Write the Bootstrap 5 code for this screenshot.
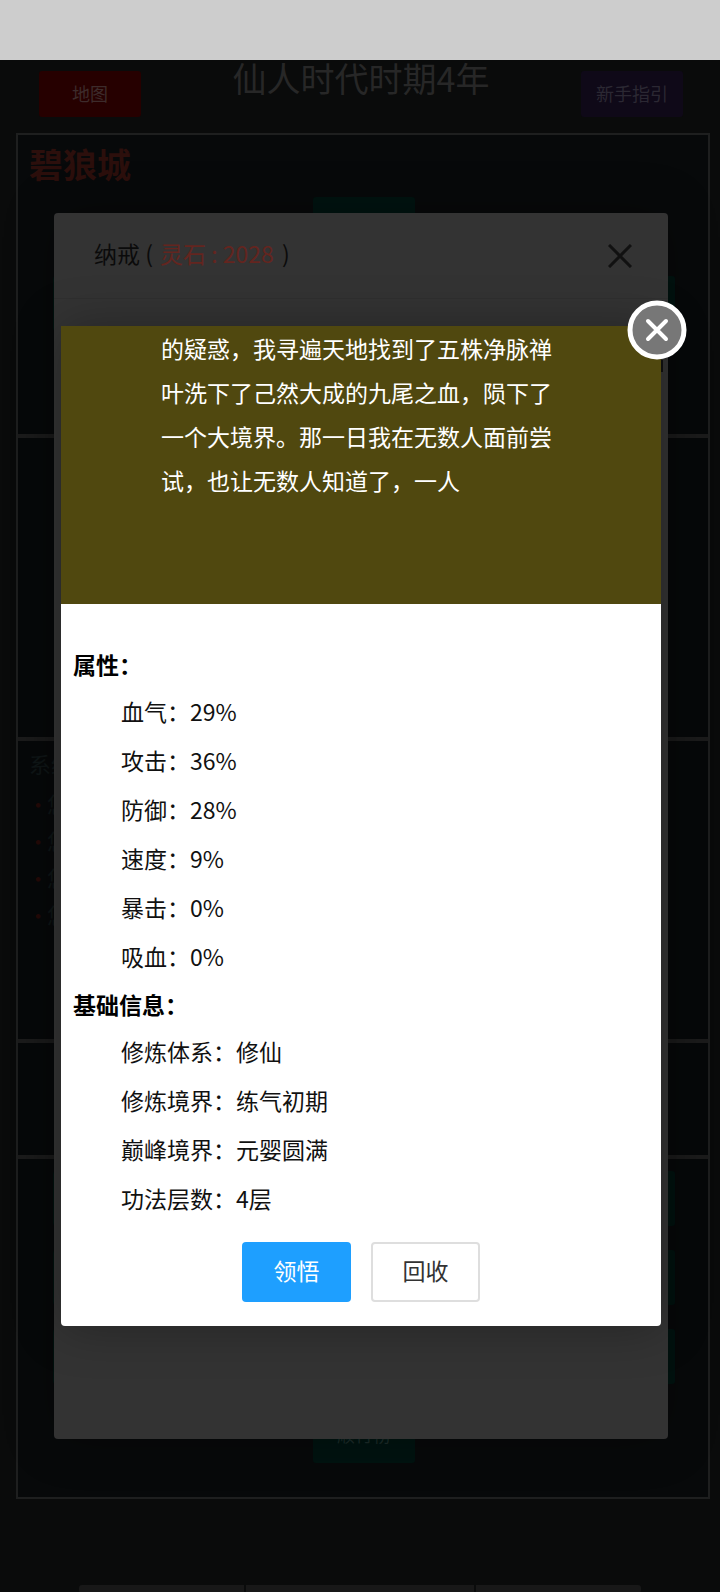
<!DOCTYPE html>
<html lang="zh-CN">
<head>
<meta charset="utf-8">
<meta name="viewport" content="width=device-width, initial-scale=1">
<title>仙人时代</title>
<link rel="stylesheet" href="https://cdn.jsdelivr.net/npm/bootstrap@5.3.0/dist/css/bootstrap.min.css">
<style>
body{background:#0a0b0b;font-family:"Noto Sans CJK SC",sans-serif;font-size:23px;color:#111}
.status-strip{height:60px;background:#cdcdcd}
.game-head{padding:0 37px 0 39px;height:73px}
.game-title{font-size:34px;line-height:36px;color:#272727}
.game-btn{width:102px;height:55px;font-size:18px;line-height:1;border:0;border-radius:3px;background:#001310;color:#1c2b29;padding:0}
.head-btn{height:46px;margin-top:11px;padding-bottom:3px}
.map-btn{background:#260000;color:#3d2b2b}
.guide-btn{background:#0f0918;color:#2b2833}
.board{margin:0 10px 0 16px;border:2px solid #1e1f1f;background:#07090a}
.zone{border-bottom:4px solid #1c1c1c;padding:0 33px 0 35px}
.zone:last-child{border-bottom:0}
.zone-tall{height:303px}
.zone-log{height:302px}
.zone-short{height:116px}
.zone-last{height:338px;padding-top:12px}
.city{font-size:34px;line-height:58px;color:#2c0f0c;margin-left:-24px}
.log{font-size:22px;line-height:44px;color:#101718;margin-left:-24px}
.log ul{list-style:none;line-height:37px}
.log li::before{content:"·";color:#260a08;display:inline-block;width:20px;margin-left:-2px}
.stack{gap:24px}
.bottom-tabs{margin:86px 79px 0;gap:2px;height:8px}
.bottom-tabs a{background:#181818;flex:230 1 0}
.bottom-tabs a:first-child{flex-grow:166;border-radius:3px 0 0 3px}
.bottom-tabs a:last-child{flex-grow:166;border-radius:0 3px 3px 0}
.bag{top:213px;left:54px;right:52px;min-height:1226px;background:#333;border-radius:4px;box-shadow:0 0 50px rgba(0,0,0,.3)}
.bag-head{height:86px;padding:0 36px 0 40px;color:#0b0b0b;border-bottom:1px solid #2f2f2f}
.bag-title{padding-bottom:4px}
.bag-head .gem{color:#64251f;padding:0 3px 0 2px}
.bag-scroll{top:147px;right:5px;width:2px;height:12px;background:#111}
.plain-btn{border:0;background:none;padding:0;line-height:0}
.detail{top:326px;left:61px;right:59px;background:#fff;border-radius:4px;box-shadow:1px 1px 50px rgba(0,0,0,.3)}
.story{background:#50480f;color:#fff;height:278px;padding:0 100px;line-height:44px}
.detail-close{top:-26px;right:-26px}
.facts{padding:37px 12px 0}
.facts h2{font-size:23px;line-height:46px;font-weight:700;color:#000}
.facts dl div{line-height:49px;padding-left:48px}
.facts dt,.facts dd{font-weight:400;margin:0}
.acts{gap:20px;padding:19px 0 24px}
.act{width:109px;height:60px;border-radius:4px;font-size:23px;line-height:1;padding:0 0 3px}
.act-main{background:#1e9fff;border:0;color:#fff}
.act-alt{background:#fff;border:2px solid #dedede;color:#333}
</style>
</head>
<body class="position-relative">
<div class="status-strip"></div>
<header class="game-head d-flex justify-content-between align-items-start">
  <button type="button" class="game-btn head-btn map-btn">地图</button>
  <h1 class="game-title fw-normal m-0">仙人时代时期4年</h1>
  <button type="button" class="game-btn head-btn guide-btn">新手指引</button>
</header>
<main class="board">
  <section class="zone zone-tall">
    <h2 class="city fw-bold mb-0">碧狼城</h2>
    <div class="d-flex flex-column stack">
      <div class="d-flex justify-content-center pt-1"><button type="button" class="game-btn" aria-label="城"></button></div>
      <div class="d-flex justify-content-between"><button type="button" class="game-btn" aria-label="左"></button><button type="button" class="game-btn" aria-label="右"></button></div>
    </div>
  </section>
  <section class="zone zone-tall"></section>
  <section class="zone zone-log">
    <div class="log">系统
      <ul class="p-0 m-0"><li>您</li><li>您</li><li>您</li><li>您</li></ul>
    </div>
  </section>
  <section class="zone zone-short"></section>
  <section class="zone zone-last d-flex flex-column stack">
    <div class="d-flex justify-content-between"><button type="button" class="game-btn" aria-label="一"></button><button type="button" class="game-btn" aria-label="二"></button></div>
    <div class="d-flex justify-content-between"><button type="button" class="game-btn" aria-label="三"></button><button type="button" class="game-btn" aria-label="四"></button></div>
    <div class="d-flex justify-content-between"><button type="button" class="game-btn" aria-label="五"></button><button type="button" class="game-btn" aria-label="六"></button></div>
    <div class="d-flex justify-content-center"><button type="button" class="game-btn pb-1">顺行榜</button></div>
  </section>
</main>
<nav class="bottom-tabs d-flex"><a href="#" aria-label="首页"></a><a href="#" aria-label="角色"></a><a href="#" aria-label="更多"></a></nav>

<section class="bag position-absolute" role="dialog" aria-label="纳戒">
  <header class="bag-head d-flex justify-content-between align-items-center">
    <div class="bag-title">纳戒 ( <span class="gem">灵石 : 2028</span> )</div>
    <button type="button" class="plain-btn" aria-label="关闭纳戒"><svg width="24" height="24" viewBox="0 0 24 24" stroke="#111" stroke-width="3"><path d="M1 1 23 23M23 1 1 23"/></svg></button>
  </header>
  <div class="bag-scroll position-absolute"></div>
</section>

<section class="detail position-absolute" role="dialog" aria-label="功法">
  <div class="story">的疑惑，我寻遍天地找到了五株净脉禅<br>叶洗下了己然大成的九尾之血，陨下了<br>一个大境界。那一日我在无数人面前尝<br>试，也让无数人知道了，一人</div>
  <button type="button" class="plain-btn detail-close position-absolute" aria-label="关闭"><svg width="60" height="60" viewBox="0 0 60 60"><circle cx="30" cy="30" r="27" fill="#777" stroke="#fff" stroke-width="5"/><path d="M21 21 39 39M39 21 21 39" stroke="#fff" stroke-width="4" stroke-linecap="round"/></svg></button>
  <div class="facts">
    <h2 class="m-0">属性：</h2>
    <dl class="m-0">
      <div class="d-flex"><dt>血气：</dt><dd>29%</dd></div>
      <div class="d-flex"><dt>攻击：</dt><dd>36%</dd></div>
      <div class="d-flex"><dt>防御：</dt><dd>28%</dd></div>
      <div class="d-flex"><dt>速度：</dt><dd>9%</dd></div>
      <div class="d-flex"><dt>暴击：</dt><dd>0%</dd></div>
      <div class="d-flex"><dt>吸血：</dt><dd>0%</dd></div>
    </dl>
    <h2 class="m-0">基础信息：</h2>
    <dl class="m-0">
      <div class="d-flex"><dt>修炼体系：</dt><dd>修仙</dd></div>
      <div class="d-flex"><dt>修炼境界：</dt><dd>练气初期</dd></div>
      <div class="d-flex"><dt>巅峰境界：</dt><dd>元婴圆满</dd></div>
      <div class="d-flex"><dt>功法层数：</dt><dd>4层</dd></div>
    </dl>
  </div>
  <div class="acts d-flex justify-content-center">
    <button type="button" class="act act-main">领悟</button>
    <button type="button" class="act act-alt">回收</button>
  </div>
</section>
<script src="https://cdn.jsdelivr.net/npm/bootstrap@5.3.0/dist/js/bootstrap.bundle.min.js"></script>
</body>
</html>
